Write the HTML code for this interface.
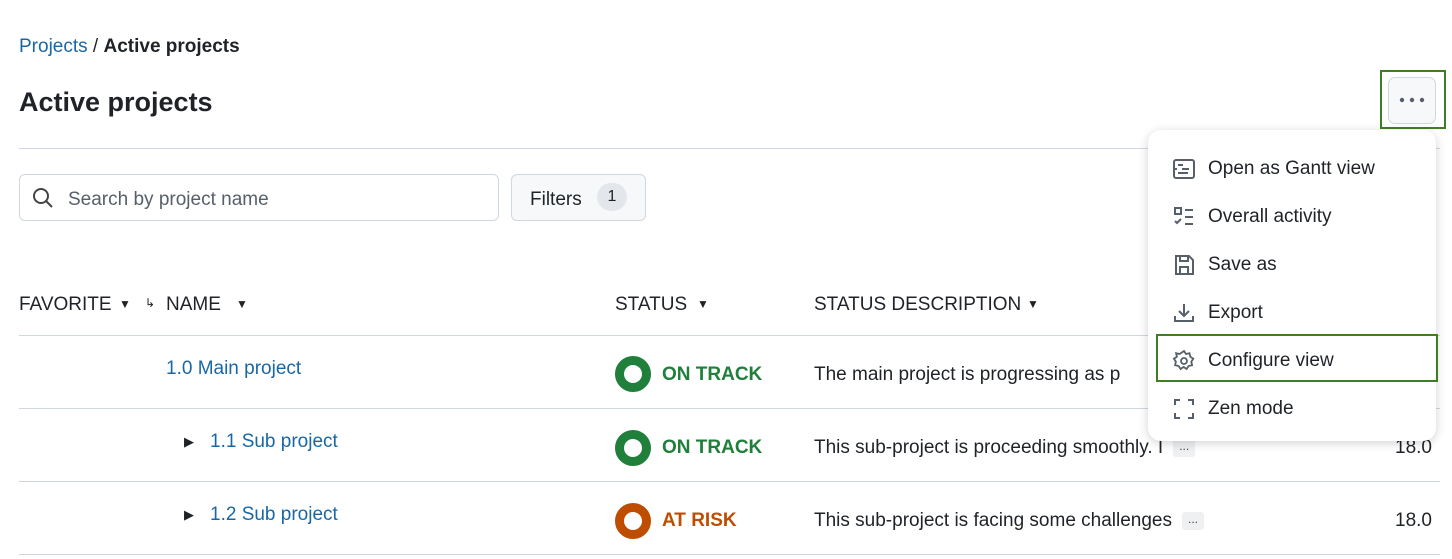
<!DOCTYPE html>
<html><head><meta charset="utf-8"><style>
*{box-sizing:border-box;margin:0;padding:0}
body{width:1452px;height:559px;overflow:hidden;background:#fff;font-family:"Liberation Sans",sans-serif;color:#1f2328;position:relative}
.a{position:absolute;white-space:nowrap}
.link{color:#1a67a3}
.hl{position:absolute;left:19px;right:12px;height:1px;background:#d0d7de}
.mi{position:absolute;left:1172px;font-size:19px;display:flex;align-items:center;gap:12px;height:24px}
.mi svg{width:24px;height:24px;flex:none}
.ring{position:absolute;width:36px;height:36px;border-radius:50%;border:9px solid #1f7f3b}
.st{font-size:19px;font-weight:bold}
.desc{font-size:19px}
.dots{display:inline-block;background:#eef0f2;color:#444;font-size:12px;padding:0 6px;border-radius:3px;height:18px;line-height:14px;vertical-align:middle;margin-left:10px}
</style></head><body>
<div class="a" style="left:19px;top:36px;font-size:19px"><span class="link">Projects</span> / <b style="font-weight:bold">Active projects</b></div>
<div class="a" style="left:19px;top:87px;font-size:27px;font-weight:bold">Active projects</div>
<div class="a" style="left:1380px;top:70px;width:66px;height:59px;border:2px solid #3f7f24"></div>
<div class="a" style="left:1388px;top:77px;width:48px;height:47px;border:1px solid #d0d7de;border-radius:7px;background:#f6f8fa"></div>
<svg class="a" style="left:1398px;top:96px" width="28" height="8" viewBox="0 0 28 8" fill="#57606a"><circle cx="4" cy="4" r="2.2"/><circle cx="14" cy="4" r="2.2"/><circle cx="24" cy="4" r="2.2"/></svg>
<div class="hl" style="top:148px"></div>
<div class="a" style="left:19px;top:174px;width:480px;height:47px;border:1px solid #d0d7de;border-radius:6px"></div>
<svg class="a" style="left:31px;top:186px" width="24" height="24" viewBox="0 0 24 24" fill="none" stroke="#444" stroke-width="2"><circle cx="10" cy="10" r="7"/><path d="M15 15l6 6"/></svg>
<div class="a" style="left:68px;top:189px;font-size:19px;color:#57606a">Search by project name</div>
<div class="a" style="left:511px;top:174px;width:135px;height:47px;border:1px solid #d0d7de;border-radius:6px;background:#f6f8fa"></div>
<div class="a" style="left:530px;top:189px;font-size:19px">Filters</div>
<div class="a" style="left:597px;top:183px;width:30px;height:28px;border-radius:14px;background:#e3e6ea;text-align:center;line-height:28px;font-size:16px">1</div>
<div class="a" style="left:19px;top:294px;font-size:19px">FAVORITE</div>
<div class="a" style="left:119px;top:297px;font-size:12px">&#9660;</div>
<div class="a" style="left:145px;top:296px;font-size:12px">&#8627;</div>
<div class="a" style="left:166px;top:294px;font-size:19px">NAME</div>
<div class="a" style="left:236px;top:297px;font-size:12px">&#9660;</div>
<div class="a" style="left:615px;top:294px;font-size:19px">STATUS</div>
<div class="a" style="left:697px;top:297px;font-size:12px">&#9660;</div>
<div class="a" style="left:814px;top:294px;font-size:19px">STATUS DESCRIPTION</div>
<div class="a" style="left:1027px;top:297px;font-size:12px">&#9660;</div>
<div class="hl" style="top:335px"></div>
<div class="hl" style="top:408px"></div>
<div class="hl" style="top:481px"></div>
<div class="hl" style="top:554px"></div>
<div class="a link" style="left:166px;top:358px;font-size:19px">1.0 Main project</div>
<div class="a" style="left:184px;top:434px;font-size:13px">&#9654;</div>
<div class="a link" style="left:210px;top:431px;font-size:19px">1.1 Sub project</div>
<div class="a" style="left:184px;top:507px;font-size:13px">&#9654;</div>
<div class="a link" style="left:210px;top:504px;font-size:19px">1.2 Sub project</div>
<div class="ring" style="left:615px;top:356px"></div>
<div class="a st" style="left:662px;top:364px;color:#1f7f3b">ON TRACK</div>
<div class="ring" style="left:615px;top:430px"></div>
<div class="a st" style="left:662px;top:437px;color:#1f7f3b">ON TRACK</div>
<div class="ring" style="left:615px;top:503px;border-color:#bf4d00"></div>
<div class="a st" style="left:662px;top:510px;color:#bf4d00">AT RISK</div>
<div class="a desc" style="left:814px;top:364px">The main project is progressing as p</div>
<div class="a desc" style="left:814px;top:437px">This sub-project is proceeding smoothly. I<span class="dots">...</span></div>
<div class="a desc" style="left:814px;top:510px">This sub-project is facing some challenges<span class="dots">...</span></div>
<div class="a desc" style="left:1395px;top:437px">18.0</div>
<div class="a desc" style="left:1395px;top:510px">18.0</div>
<div class="a" style="left:1148px;top:130px;width:288px;height:311px;background:#fff;border-radius:13px;box-shadow:0 2px 10px rgba(0,0,0,.18)"></div>
<div class="a" style="left:1156px;top:334px;width:282px;height:48px;border:2px solid #3f7f24"></div>
<div class="mi" style="top:157px"><svg viewBox="0 0 24 24" fill="none" stroke="#57606a" stroke-width="2"><rect x="2" y="3" width="20" height="18" rx="2"/><path d="M6 8h5M10 12h7M6 16h10M2 12h3"/></svg>Open as Gantt view</div>
<div class="mi" style="top:205px"><svg viewBox="0 0 24 24" fill="none" stroke="#57606a" stroke-width="2"><rect x="3" y="3" width="6" height="6"/><path d="M3 16l2 2 4-4M13 5h8M13 12h8M13 19h8"/></svg>Overall activity</div>
<div class="mi" style="top:253px"><svg viewBox="0 0 24 24" fill="none" stroke="#57606a" stroke-width="2"><path d="M4 3h13l4 4v14H4z"/><path d="M8 3v5h8V3M8 21v-7h8v7"/></svg>Save as</div>
<div class="mi" style="top:301px"><svg viewBox="0 0 24 24" fill="none" stroke="#57606a" stroke-width="2"><path d="M12 3v12M7 10l5 5 5-5M3 15v5h18v-5"/></svg>Export</div>
<div class="mi" style="top:349px"><svg viewBox="0 0 24 24" fill="none" stroke="#57606a" stroke-width="1.8"><circle cx="12" cy="12" r="3"/><path d="M12 2l2 3 3.5-.8.8 3.5 3 2-2 3 .8 3.5-3.5.8-2 3-3-2-3 2-2-3-3.5-.8.8-3.5-2-3 3-2-.8-3.5 3.5.8z"/></svg>Configure view</div>
<div class="mi" style="top:397px"><svg viewBox="0 0 24 24" fill="none" stroke="#57606a" stroke-width="2"><path d="M3 8V3h5M16 3h5v5M21 16v5h-5M8 21H3v-5"/></svg>Zen mode</div>
</body></html>
